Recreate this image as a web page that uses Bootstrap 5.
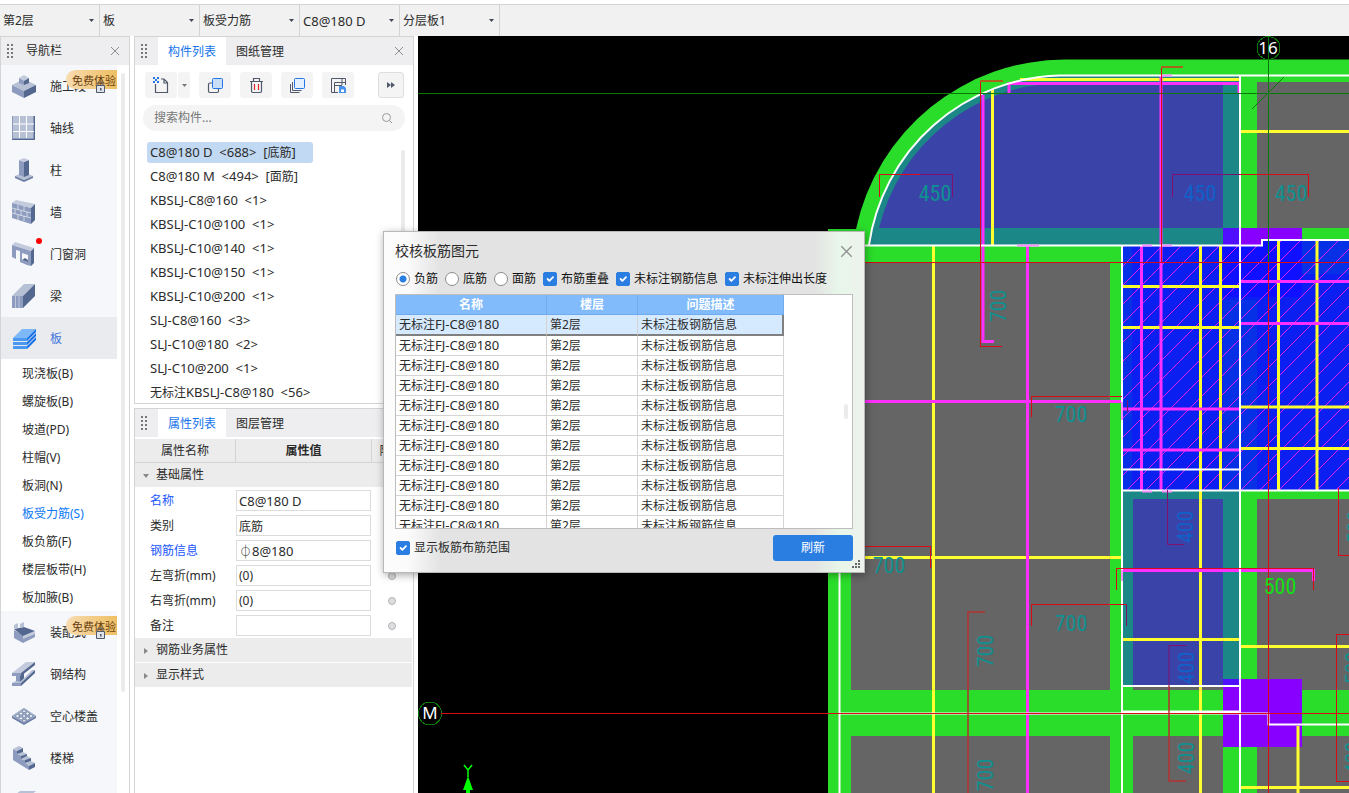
<!DOCTYPE html>
<html lang="zh-CN">
<head>
<meta charset="utf-8">
<meta name="viewport" content="width=device-width, initial-scale=1">
<title>校核板筋图元</title>
<link href="https://cdn.jsdelivr.net/npm/bootstrap@5.3.0/dist/css/bootstrap.min.css" rel="stylesheet">
<style>
  body { font: 12px/18px "Noto Sans", "Noto Sans CJK SC", sans-serif; color: #2b2b2b; background: #fff; }
  a { color: inherit; text-decoration: none; }
  button { color: inherit; }
  .latin { font-size: 13px; }
  .topbar { height: 32px; margin-top: 4px; background: #f1f1f1; border-top: 1px solid #d4d4d4; }
  .topbar select { width: 100px; height: 31px; padding: 0 0 0 3px; appearance: none; border: 0; border-right: 1px solid #d4d4d4; color: #2b2b2b;
    background: #f1f1f1 url("data:image/svg+xml,%3Csvg xmlns='http://www.w3.org/2000/svg' width='5' height='3'%3E%3Cpath d='M0 0h5L2.500 3z' fill='%23404658'/%3E%3C/svg%3E") no-repeat right 5px center; }
  .pane { border: 1px solid #d4d4d4; background: #fff; }
  .nav-pane { width: 130px; }
  .props-col { width: 280px; }
  .pane-head { height: 28px; padding: 0 9px 0 6px; background: #eeeef0; }
  .grip { width: 7px; height: 14px; background: radial-gradient(circle at 1px 1px, #777 1px, transparent 1px) 0 0 / 4px 4px; }
  .grip + .tab-btn { margin-left: 10px; }
  .nav-name { margin-left: 12px; }
  .tab-btn { height: 28px; padding: 1px 10px 0; border: 0; background: none; }
  .tab-btn.on { background: #fff; color: #1673ea; }
  .x-btn { border: 0; background: none; padding: 0; display: flex; }
  .nav-list { width: 116px; background: #f5f7fa; }
  .nav-entry { height: 42px; padding-left: 11px; gap: 14px; }
  .nav-entry > span:not(.new-dot) { padding-top: 2px; }
  .nav-entry.on { background: #eaebef; color: #3f74dd; }
  .sub-list { background: #fff; }
  .sub-list a { display: block; height: 28px; line-height: 30px; padding-left: 21px; }
  .sub-list a.on { color: #0b78f5; }
  .trial { right: 0; top: 5px; width: 51px; height: 19px; padding-left: 6px; border-radius: 10px 0 0 10px; background: linear-gradient(90deg, #f8dcb0, #eebf62); color: #6a3f10; white-space: nowrap; font-size: 11px; }
  .lock { left: 94px; top: 16px; }
  .new-dot { left: 35px; top: 5px; width: 6px; height: 6px; background: red; }
  .bar-thumb { width: 4px; border-radius: 2px; background: #ebebeb; }
  .tools { padding: 7px 9px 7px 10px; gap: 9px; }
  .tool { width: 32px; height: 26px; border: 0; border-radius: 3px; background: #f4f4f4; display: flex; align-items: center; justify-content: center; padding: 0; }
  .tool.slim { width: 12px; margin-left: 1px; }
  .tool.more { width: 26px; border: 1px solid #dedede; }
  .search-box { height: 26px; border-radius: 13px; background: #f4f4f4; margin: 0 8px; padding: 0 12px 0 11px; }
  .search-box input { border: 0; background: none; outline: 0; padding: 0; }
  .search-box input::placeholder { color: #777; }
  .list-wrap { padding: 11px 8px 0 12px; }
  .comp-list { font-size: 13px; }
  .comp-list span { font-size: 12px; }
  .comp-list a { display: block; width: 166px; height: 21px; line-height: 21px; margin-bottom: 3px; padding-left: 3px; border-radius: 3px; white-space: nowrap; }
  .comp-list a:last-child { margin-bottom: 0; }
  .comp-list a.on { background: #c1d9f2; }
  .prop-grid { width: 277px; margin-top: 2px; table-layout: fixed; border-collapse: separate; border-spacing: 0; }
  .prop-grid th { height: 24px; padding: 0; font-weight: 400; text-align: center; background: #ececec; border-right: 1px solid #d4d4d4; border-bottom: 1px solid #d4d4d4; overflow: hidden; white-space: nowrap; }
  .prop-grid td { height: 25px; padding: 0; }
  .prop-grid td:first-child { padding-left: 15px; }
  .prop-grid td.group { padding-left: 8px; background: #ececec; border-bottom: 1px solid #fff; }
  .prop-grid td.group svg { width: 6px; margin-right: 7px; }
  .prop-grid input[type=text] { display: block; width: 135px; height: 21px; border: 1px solid #dcdcdc; padding: 0 2px; outline: 0; color: #2b2b2b; }
  .blue-label { color: #1a56ff; }
  .grey-dot { display: block; width: 8px; height: 8px; margin: auto; border-radius: 50%; border: 1px solid #b0b2b6; background: #dedee0; }
  .dlg { left: 383px; top: 231px; width: 482px; min-height: 342px; border: 1px solid #b8b8b8; box-shadow: 1px 2px 8px rgba(0,0,0,.35);
    background: linear-gradient(90deg, #fdfdfd 0, #fbfbfb 24px, #e3e3e3 56px, #e3e3e3 430px, #e8f7e9 456px, #eef1ee 100%); padding: 10px 11px 11px; }
  .dlg-title { font-size: 14px; }
  .dlg input[type=radio], .dlg input[type=checkbox] { width: 14px; height: 14px; margin: 0 3px 0 0; border: 1px solid #8c8c8c; flex: none; }
  .dlg input[type=checkbox] { border-radius: 2px; }
  .dlg input[type=checkbox]:checked { background-color: #2a7de1; border-color: #2a7de1; }
  .dlg input[type=radio]:checked { background: #fff radial-gradient(circle, #2a7de1 3px, transparent 4px); }
  .opts { padding: 10px 0 6px 1px; }
  .opts label { gap: 1px; margin-right: 7px; color: #111; white-space: nowrap; }
  .dlg-foot { padding-top: 6px; }
  .dlg-foot label { gap: 1px; padding-left: 1px; }
  .grid-box { height: 235px; border: 1px solid #bdbdbd; background: #fff; overflow: hidden; }
  .issue-grid { width: 388px; table-layout: fixed; border-collapse: separate; border-spacing: 0; }
  .issue-grid th { height: 20px; padding: 0; text-align: center; color: #fff; background: #82bbfb; border-right: 1px solid #6fabee; border-bottom: 1px solid #6fabee; }
  .issue-grid td { height: 20px; padding: 0 3px; line-height: 18px; border-right: 1px solid #d4d4d4; border-bottom: 1px solid #d4d4d4; white-space: nowrap; }
  .issue-grid tr.on td { background: #d6eaff; border-bottom: 2px solid #808080; }
  .issue-grid tr.on td:last-child { border-right: 2px solid #808080; }
  .refresh { width: 80px; height: 26px; padding: 0; border: 0; border-radius: 3px; background: #2a7de1; color: #fff; }
  .cad { background: #000; }
  .cad text { font-family: "Liberation Sans Narrow", "Roboto Condensed", "DejaVu Sans Condensed", sans-serif; text-anchor: middle; }
  .cad .axis-name { font-family: "Noto Sans", sans-serif; }
</style>
</head>
<body class="vh-100 overflow-hidden d-flex flex-column">
<svg width="0" height="0" class="position-absolute" aria-hidden="true">
  <symbol id="cross" viewBox="0 0 10 10"><path d="M1 1l8 8M9 1l-8 8" fill="none" stroke="#8e8e8e"/></symbol>
  <symbol id="lockIcon" viewBox="0 0 11 12"><path d="M3 5V2.500Q3 1 5.500 1T8 2.500V5" fill="none" stroke="#5a5a5a"/><path d="M1.500 4.500h8v7h-8z" fill="#dfe3e8" stroke="#4e5a6c"/><path d="M5 7h1.500v2.500H5z" fill="#4e5a6c"/></symbol>
</svg>

<header class="topbar d-flex flex-shrink-0">
  <select aria-label="楼层"><option>第2层</option></select>
  <select aria-label="构件类别"><option>板</option></select>
  <select aria-label="构件类型"><option>板受力筋</option></select>
  <select aria-label="构件" class="latin"><option>C8@180 D</option></select>
  <select aria-label="分层"><option>分层板1</option></select>
</header>

<div class="d-flex flex-grow-1 overflow-hidden">
  <!-- 导航栏 -->
  <aside class="pane nav-pane flex-shrink-0 border-bottom-0 overflow-hidden me-1">
    <div class="pane-head d-flex align-items-center">
      <span class="grip"></span><span class="nav-name flex-grow-1">导航栏</span>
      <button class="x-btn" aria-label="关闭"><svg width="10" height="10"><use href="#cross"/></svg></button>
    </div>
    <div class="d-flex">
      <nav class="nav-list">
        <a href="#" class="nav-entry d-flex align-items-center position-relative">
          <svg width="24" height="24" viewBox="0 0 24 24"><path d="M0 11l12-6 12 6-12 6z" fill="#b7c1d6"/><path d="M0 11l12 6v7L0 18z" fill="#8d9cbe"/><path d="M24 11l-12 6v7l12-6z" fill="#54678f"/><path d="M7 4l5-3 5 3-5 3z" fill="#c3cbdc"/><path d="M7 4l5 3v4L7 9z" fill="#8d9cbe"/><path d="M17 4l-5 3v4l5-2z" fill="#54678f"/></svg>
          <span>施工段</span><span class="trial position-absolute">免费体验</span><svg class="lock position-absolute" width="11" height="12"><use href="#lockIcon"/></svg>
        </a>
        <a href="#" class="nav-entry d-flex align-items-center">
          <svg width="24" height="24" viewBox="0 0 24 24"><path d="M0 0h23v24H0z" fill="#54678f"/><path d="M0 0h21.500v22.500H0z" fill="#b7c1d6"/><path d="M7.500 0v22M14.500 0v22M0 8h22M0 15.500h22" stroke="#fff"/><path d="M.5 0v22.500h21" fill="none" stroke="#8d9cbe"/></svg><span>轴线</span></a>
        <a href="#" class="nav-entry d-flex align-items-center">
          <svg width="24" height="24" viewBox="0 0 24 24"><path d="M3 18l9-4 9 4-9 4z" fill="#b7c1d6"/><path d="M3 18l9 4v2l-9-4zM21 18l-9 4v2l9-4z" fill="#6c7da5"/><path d="M7 2l5 2v15l-5-2z" fill="#8d9cbe"/><path d="M17 2l-5 2v15l5-2z" fill="#54678f"/><path d="M7 2l5-2 5 2-5 2z" fill="#c3cbdc"/></svg><span>柱</span></a>
        <a href="#" class="nav-entry d-flex align-items-center">
          <svg width="24" height="24" viewBox="0 0 24 24"><path d="M0 3l4-3 19 4-4 4z" fill="#c3cbdc"/><path d="M0 3l19 5v16L0 18z" fill="#8d9cbe"/><path d="M19 8l4-4v16l-4 4z" fill="#54678f"/><path d="M0 8l19 5M0 13l19 5M6 5v5M12 6v5M3 9v5M9 11v5M15 12v5M6 15v5M12 16v5" stroke="#dfe4ee" stroke-width=".8"/></svg><span>墙</span></a>
        <a href="#" class="nav-entry d-flex align-items-center position-relative">
          <svg width="24" height="24" viewBox="0 0 24 24"><path d="M0 3l3-3 19 6-3 3z" fill="#c3cbdc"/><path d="M0 3l19 6v15l-4-1-7-3V9L4 8v9l-4-2zM10 11v7l6 2v-7z" fill="#8d9cbe" fill-rule="evenodd"/><path d="M19 9l3-3v15l-3 3zM10 18l3-2 3 2v2z" fill="#54678f"/></svg><span>门窗洞</span><span class="new-dot position-absolute rounded-circle"></span></a>
        <a href="#" class="nav-entry d-flex align-items-center">
          <svg width="24" height="24" viewBox="0 0 24 24"><path d="M0 12L12 0h11L11 12z" fill="#b7c1d6"/><path d="M11 12L23 0v12L11 24z" fill="#54678f"/><path d="M0 12h11v12H0z" fill="#8d9cbe"/><path d="M3.500 12v12M7 12v12" stroke="#c9d1e2" stroke-width=".8"/></svg><span>梁</span></a>
        <a href="#" class="nav-entry on d-flex align-items-center">
          <svg width="24" height="24" viewBox="0 0 24 24"><path d="M1 12l9-9h14l-9 9z" fill="#7db8f8"/><path d="M1 12h14v3H1zM1 16h14v3H1zM1 20h14v3H1z" fill="#4a98f0"/><path d="M15 12l9-9v3l-9 9zM15 16l9-9v3l-9 9zM15 20l9-9v3l-9 9z" fill="#1a72e8"/></svg><span>板</span></a>
        <div class="sub-list">
          <a href="#">现浇板(B)</a><a href="#">螺旋板(B)</a><a href="#">坡道(PD)</a><a href="#">柱帽(V)</a><a href="#">板洞(N)</a><a href="#" class="on">板受力筋(S)</a><a href="#">板负筋(F)</a><a href="#">楼层板带(H)</a><a href="#">板加腋(B)</a>
        </div>
        <a href="#" class="nav-entry d-flex align-items-center position-relative">
          <svg width="24" height="24" viewBox="0 0 24 24"><path d="M2 10l9 5 12-4v6l-12 6-9-5z" fill="#8d9cbe"/><path d="M2 9l10-2 11 4-12 5z" fill="#54678f"/><path d="M11 16l12-5v3l-12 5z" fill="#c3cbdc"/><path d="M2 5l4-2v5L2 9zM8 4l4-2v5L8 8z" fill="#b7c1d6"/></svg>
          <span>装配式</span><span class="trial position-absolute">免费体验</span><svg class="lock position-absolute" width="11" height="12"><use href="#lockIcon"/></svg></a>
        <a href="#" class="nav-entry d-flex align-items-center">
          <svg width="24" height="24" viewBox="0 0 24 24"><path d="M0 11L14 0h9L9 11z" fill="#c3cbdc"/><path d="M9 11L23 0v3L9 14z" fill="#54678f"/><path d="M0 11h9v3H0z" fill="#8d9cbe"/><path d="M4 14h4v6H4z" fill="#8d9cbe"/><path d="M8 14l4-3v6l-4 3z" fill="#54678f"/><path d="M8 20l12-12h3L9 21H0l4-2z" fill="#b7c1d6"/><path d="M0 21h9v3H0z" fill="#8d9cbe"/><path d="M9 21L23 8v3L9 24z" fill="#54678f"/></svg><span>钢结构</span></a>
        <a href="#" class="nav-entry d-flex align-items-center">
          <svg width="24" height="24" viewBox="0 0 24 24"><path d="M0 12l12-8 12 8v2l-12 7-12-7z" fill="#6c7da5"/><path d="M0 12l12-8 12 8-12 7z" fill="#aab6ce"/><path d="M3 12l2.500-1.600L8 12l-2.500 1.600zM6.500 9.600L9 8l2.500 1.600L9 11.200zM10 7.200l2-1.400 2.500 1.400L12 8.800zM6.500 14.400L9 12.800l2.500 1.600L9 16zM10 12l2-1.400 2.500 1.400L12 13.600zM13 9.600L15.500 8 18 9.600l-2.500 1.600zM10 16.800l2-1.400 2.500 1.400L12 18zM13 14.400l2.500-1.600 2.500 1.600-2.500 1.600zM16.500 12l2.500-1.600 2.500 1.600-2.500 1.600z" fill="#f5f7fa" stroke="#54678f" stroke-width=".6"/></svg><span>空心楼盖</span></a>
        <a href="#" class="nav-entry d-flex align-items-center">
          <svg width="24" height="24" viewBox="0 0 24 24"><path d="M1 3l4 2v3l4 1v4l4 1v3l4 1v6L1 14z" fill="#8d9cbe"/><path d="M1 3l6-3 4 2-6 3zM5 8l6-2 4 2-6 2zM9 13l6-3 4 2-6 2zM13 17l6-2 4 2-6 3z" fill="#b7c1d6"/><path d="M5 5l6-3v4L5 8zM9 10l6-2v2l-6 3zM13 14l6-2v3l-6 2zM17 20l6-3v4l-6 3z" fill="#54678f"/></svg><span>楼梯</span></a>
        <a href="#" class="nav-entry d-flex align-items-center" aria-label="其他">
          <svg width="24" height="24" viewBox="0 0 24 24"><path d="M4 6l4-3h16l-5 4v14H4z" fill="#b7c1d6"/></svg></a>
      </nav>
      <div class="bar-thumb ms-1 mt-2" style="height:78vh"></div>
    </div>
  </aside>

  <!-- 构件列表与属性列表 -->
  <section class="props-col flex-shrink-0 d-flex flex-column me-1">
    <div class="pane">
      <div class="pane-head d-flex align-items-center">
        <span class="grip"></span>
        <button class="tab-btn on">构件列表</button><button class="tab-btn">图纸管理</button>
        <button class="x-btn ms-auto" aria-label="关闭"><svg width="10" height="10"><use href="#cross"/></svg></button>
      </div>
      <div class="tools d-flex align-items-center">
        <div class="d-flex">
          <button class="tool" aria-label="新建"><svg width="17" height="17" viewBox="0 0 17 17"><path d="M2.500 7v8.500h12V5.500L11 2H8M11 2v4h3.500" fill="none" stroke="#50586a" stroke-width="1.200"/><path d="M0 0h2v2H0zM4 0h2v2H4zM2 2h2v2H2zM0 4h2v2H0zM4 4h2v2H4z" fill="#2277e5"/></svg></button>
          <button class="tool slim" aria-label="新建选项"><svg width="5" height="3"><path d="M0 0h5L2.500 3z" fill="#777"/></svg></button>
        </div>
        <button class="tool" aria-label="复制"><svg width="17" height="17" viewBox="0 0 17 17"><path d="M5 6H3Q1.500 6 1.500 7.500V14Q1.500 15.500 3 15.500h7Q11.500 15.500 11.500 14v-2" fill="none" stroke="#50586a" stroke-width="1.200"/><rect x="5.500" y="1.500" width="10" height="10" rx="1" fill="#c9def7" stroke="#2277e5"/></svg></button>
        <button class="tool" aria-label="删除"><svg width="17" height="17" viewBox="0 0 17 17"><path d="M2 4.500h13M5.500 4V1.500h6V4M3.500 5v9Q3.500 15.500 5 15.500h7Q13.500 15.500 13.500 14V5" fill="none" stroke="#50586a" stroke-width="1.200"/><path d="M6.500 7v6M10.500 7v6" stroke="#e5222e" stroke-width="1.200"/></svg></button>
        <button class="tool" aria-label="层间复制"><svg width="17" height="17" viewBox="0 0 17 17"><path d="M1.500 7v8.500h9M3.500 5v8.500h9" fill="none" stroke="#50586a"/><rect x="5.500" y="1.500" width="10" height="10" rx="1" fill="#e4f0fd" stroke="#2277e5"/></svg></button>
        <button class="tool" aria-label="存档"><svg width="17" height="17" viewBox="0 0 17 17"><path d="M8 15.500H1.500v-14h14V8M4.500 15V5.500H15M4.500 8.500H12M12 2v6" fill="none" stroke="#50586a"/><path d="M9 9h5l2 2v5H9z" fill="#4a93ec"/><path d="M11 12.500h3V15h-3z" fill="#fff"/></svg></button>
        <button class="tool more ms-auto" aria-label="更多"><svg width="8" height="6"><path d="M0 0l4 3-4 3zM4 0l4 3-4 3z" fill="#50586a"/></svg></button>
      </div>
      <div class="search-box d-flex align-items-center">
        <input type="text" class="flex-grow-1" placeholder="搜索构件..." aria-label="搜索构件">
        <svg width="12" height="12" viewBox="0 0 12 12"><circle cx="5.500" cy="5.500" r="4" fill="none" stroke="#999"/><path d="M8.500 8.500l2.500 2.500" stroke="#999"/></svg>
      </div>
      <div class="list-wrap d-flex justify-content-between">
        <div class="comp-list">
          <a href="#" class="on">C8@180 D &nbsp;&lt;688&gt; &nbsp;[<span>底筋</span>]</a><a href="#">C8@180 M &nbsp;&lt;494&gt; &nbsp;[<span>面筋</span>]</a><a href="#">KBSLJ-C8@160 &nbsp;&lt;1&gt;</a><a href="#">KBSLJ-C10@100 &nbsp;&lt;1&gt;</a><a href="#">KBSLJ-C10@140 &nbsp;&lt;1&gt;</a><a href="#">KBSLJ-C10@150 &nbsp;&lt;1&gt;</a><a href="#">KBSLJ-C10@200 &nbsp;&lt;1&gt;</a><a href="#">SLJ-C8@160 &nbsp;&lt;3&gt;</a><a href="#">SLJ-C10@180 &nbsp;&lt;2&gt;</a><a href="#">SLJ-C10@200 &nbsp;&lt;1&gt;</a><a href="#"><span>无标注</span>KBSLJ-C8@180 &nbsp;&lt;56&gt;</a>
        </div>
        <div class="bar-thumb mt-2" style="height:160px"></div>
      </div>
    </div>
    <div class="pane flex-grow-1 mt-1 border-bottom-0">
      <div class="pane-head d-flex align-items-center">
        <span class="grip"></span>
        <button class="tab-btn on">属性列表</button><button class="tab-btn">图层管理</button>
      </div>
      <table class="prop-grid">
        <colgroup><col style="width:101px"><col style="width:136px"><col></colgroup>
        <thead><tr><th>属性名称</th><th class="fw-bold">属性值</th><th>附加</th></tr></thead>
        <tbody>
          <tr><td class="group" colspan="3"><svg height="4" class="align-middle"><path d="M0 0h6L3 4z" fill="#888"/></svg>基础属性</td></tr>
          <tr><td><label class="blue-label" for="p1">名称</label></td><td><input type="text" class="latin" id="p1" value="C8@180 D"></td><td></td></tr>
          <tr><td><label for="p2">类别</label></td><td><input type="text" id="p2" value="底筋"></td><td><span class="grey-dot"></span></td></tr>
          <tr><td><label class="blue-label" for="p3">钢筋信息</label></td><td><input type="text" class="latin" id="p3" value="⏀8@180"></td><td><span class="grey-dot"></span></td></tr>
          <tr><td><label for="p4">左弯折(mm)</label></td><td><input type="text" id="p4" value="(0)"></td><td><span class="grey-dot"></span></td></tr>
          <tr><td><label for="p5">右弯折(mm)</label></td><td><input type="text" id="p5" value="(0)"></td><td><span class="grey-dot"></span></td></tr>
          <tr><td><label for="p6">备注</label></td><td><input type="text" id="p6" value=""></td><td><span class="grey-dot"></span></td></tr>
          <tr><td class="group" colspan="3"><svg height="6" class="align-middle"><path d="M1 0l4 3-4 3z" fill="#888"/></svg>钢筋业务属性</td></tr>
          <tr><td class="group" colspan="3"><svg height="6" class="align-middle"><path d="M1 0l4 3-4 3z" fill="#888"/></svg>显示样式</td></tr>
        </tbody>
      </table>
    </div>
  </section>

  <!-- 绘图区 -->
  <main class="cad flex-grow-1 overflow-hidden">
    <svg class="d-block w-100 h-100" viewBox="418 36 931 757" preserveAspectRatio="xMinYMin slice">
      <defs>
        <pattern id="hatch" width="19" height="19" patternUnits="userSpaceOnUse" patternTransform="translate(1122 286)"><path d="M-1 20L20-1" stroke="#e01ff0" shape-rendering="crispEdges"/></pattern>
      </defs>
      <!-- 梁与墙 -->
      <path d="M828 793V229h28A214 214 0 0 1 1065 59.500H1349V793z" fill="#2bdd2b"/>
      <path d="M869 245A198 198 0 0 1 1060 75.500H1240V245z" fill="#1b8787"/>
      <path d="M879 228A190 190 0 0 1 1060 83H1223V228z" fill="#3a44a8"/>
      <g fill="#656565">
        <path d="M851 262h259v428H851zM851 736h259v57H851zM1133 736h90v57h-90zM1257 82h92v146h-92zM1257 499h92v191h-92zM1257 736h92v57h-92zM1133 685h90v5h-90z"/>
      </g>
      <path d="M1122 491h118v194h-118z" fill="#1b8787"/><path d="M1133 499h90v186h-90z" fill="#3a44a8"/>
      <path d="M1223 228h79v20h-79zM1223 679h79v68h-79z" fill="#8800ff"/><path d="M1223 228h17v20h-17zM1223 679h17v6h-17z" fill="#5010ff"/>
      <path d="M1122 245h118v245h-118zM1240 245h22v-5h87v250h-109z" fill="#0a1ff0"/>
      <path d="M1122 245h10v245h-10zM1223 300h34v190h-34zM1302 240h47v34h-47z" fill="#0630e6"/>
      <path d="M1223 245h17v52h-17zM1240 245h22v-5h40v57h-62z" fill="#0f10ff"/>
      <path d="M1122 245h118v245h-118zM1240 245h22v-5h87v250h-109z" fill="url(#hatch)"/>
      <!-- 钢筋线 -->
      <g fill="none" stroke="#ffff30" stroke-width="3">
        <path d="M933.500 246V793M992.500 90V245M1020 79.500H1239M1200.500 246V793M1220.500 246V490M1122 286.500H1239M1122 327.500H1239M1278.500 240V490M1317 240V490M1241 131.500H1349M1241 407H1349M1241 448.500H1349M865 557.500H1121M1122 639.500H1239M1241 646.500H1349M1241 787.500H1349M1298 726V793"/>
      </g>
      <g fill="none" stroke="#ff30ff" stroke-width="3">
        <path d="M983 95V341.500H994M1027.500 246V793M1009 94V83.500H1239V94M1141.500 246V490M1161 76V490M865 401.500H1121M1122 409H1239M1122 450H1239M1240 281.500H1349M1240 323.500H1349M1122 570.500H1313.500V581"/>
      </g>
      <g fill="none" stroke="#fff" stroke-width="2">
        <path d="M869 245A198 198 0 0 1 1060 75.500H1349M865 245.500H1262V240H1349M1240 76V793M1122 245V793M839.500 573V793M1122 469.500H1240M1122 490.500H1349M1122 686H1240M1122 711.500H1240M840 713.500H1268.500V724.500H1349"/>
      </g>
      <path d="M1017 245.500h22M1028 713.500h12M1142 245.500h10M1162 245.500h10M1142 491.500h10M1162 491.500h10M1161 75.500h11M1122 570v11M1122 402v18" stroke="#ff90ff" stroke-width="2"/>
      <!-- 轴网 -->
      <g fill="none" stroke="#087a08" shape-rendering="crispEdges">
        <path d="M418 93.500H1349M1268.500 36V262"/><circle cx="1268.500" cy="48" r="11.500"/><circle cx="430" cy="713.500" r="11.500"/>
      </g>
      <path d="M1252 109l32-32" stroke="#087a08"/>
      <!-- 标注线 -->
      <g fill="none" stroke="#dc0a14" shape-rendering="crispEdges">
        <path d="M441 713.500H1349M865 262.500H1349M1268.500 262V793M980.500 81V346.500H1002M1161 67V262M879.500 197V174.500H920M1240 174.500H1308V197M865 546.500H930V568M1031 417V396.500H1122M1031 626V604.500H1126M1116.500 590V568.500H1313.500V590M1349 555.500H1338.500V488M1349 634.500H1336.500V781H1349"/>
      </g>
      <path d="M980 81h23M1161 67h22" stroke="#a8641c" stroke-width="2"/>
      <path d="M985 612H968V793M1169 686V781H1186" fill="none" stroke="#b53030" stroke-width="1.500"/>
      <path d="M920 174.500H952.500V197M1172.500 197V174.500H1240M1167.500 490V544.500H1184M1186 645.500H1169V686M1126.500 604V626M1127.500 400V412" fill="none" stroke="#801070"/>
      <g font-size="22" fill="#0f9090">
        <text x="935" y="201">450</text><text x="1200" y="201" fill="#1060c8">450</text><text x="1291" y="201">450</text>
        <text x="889" y="573">700</text><text x="1071" y="422">700</text><text x="1071" y="631">700</text><text x="1280" y="594" fill="#10e010">500</text>
        <text transform="translate(1006 306) rotate(-90)">700</text><text transform="translate(993 651) rotate(-90)">700</text><text transform="translate(993 775) rotate(-90)">700</text>
        <text transform="translate(1193 527) rotate(-90)" fill="#1060c8">400</text><text transform="translate(1194 668) rotate(-90)" fill="#1060c8">400</text><text transform="translate(1194 758) rotate(-90)">400</text>
        <text transform="translate(1363 527) rotate(-90)">500</text><text transform="translate(1361 668) rotate(-90)">500</text><text transform="translate(1361 758) rotate(-90)">400</text>
      </g>
      <g fill="#fff" font-size="17"><text class="axis-name" x="1268" y="54">16</text><text class="axis-name" x="430" y="719">M</text></g>
      <path d="M464 765l4 5 4-5M468 770v7" fill="none" stroke="#0f0" stroke-width="1.500"/><path d="M468 776l-5 14h3v3h4v-3h3z" fill="#0f0"/>
    </svg>
  </main>
</div>

<!-- 浮动窗口 -->
<div class="dlg position-absolute d-flex flex-column" role="dialog" aria-labelledby="dlgTitle">
  <div class="d-flex align-items-center justify-content-between">
    <span id="dlgTitle" class="dlg-title">校核板筋图元</span>
    <button class="x-btn" aria-label="关闭"><svg width="13" height="13"><use href="#cross"/></svg></button>
  </div>
  <div class="opts d-flex align-items-center">
    <label class="d-flex align-items-center"><input class="form-check-input" type="radio" name="kind" checked>负筋</label>
    <label class="d-flex align-items-center"><input class="form-check-input" type="radio" name="kind">底筋</label>
    <label class="d-flex align-items-center"><input class="form-check-input" type="radio" name="kind">面筋</label>
    <label class="d-flex align-items-center"><input class="form-check-input" type="checkbox" checked>布筋重叠</label>
    <label class="d-flex align-items-center"><input class="form-check-input" type="checkbox" checked>未标注钢筋信息</label>
    <label class="d-flex align-items-center me-0"><input class="form-check-input" type="checkbox" checked>未标注伸出长度</label>
  </div>
  <div class="grid-box flex-shrink-0 d-flex justify-content-between">
    <table class="issue-grid align-self-start">
      <colgroup><col style="width:151px"><col style="width:91px"><col></colgroup>
      <thead><tr><th>名称</th><th>楼层</th><th>问题描述</th></tr></thead>
      <tbody>
        <tr class="on"><td>无标注<span class="latin">FJ-C8@180</span></td><td>第2层</td><td>未标注板钢筋信息</td></tr>
        <tr><td>无标注<span class="latin">FJ-C8@180</span></td><td>第2层</td><td>未标注板钢筋信息</td></tr>
        <tr><td>无标注<span class="latin">FJ-C8@180</span></td><td>第2层</td><td>未标注板钢筋信息</td></tr>
        <tr><td>无标注<span class="latin">FJ-C8@180</span></td><td>第2层</td><td>未标注板钢筋信息</td></tr>
        <tr><td>无标注<span class="latin">FJ-C8@180</span></td><td>第2层</td><td>未标注板钢筋信息</td></tr>
        <tr><td>无标注<span class="latin">FJ-C8@180</span></td><td>第2层</td><td>未标注板钢筋信息</td></tr>
        <tr><td>无标注<span class="latin">FJ-C8@180</span></td><td>第2层</td><td>未标注板钢筋信息</td></tr>
        <tr><td>无标注<span class="latin">FJ-C8@180</span></td><td>第2层</td><td>未标注板钢筋信息</td></tr>
        <tr><td>无标注<span class="latin">FJ-C8@180</span></td><td>第2层</td><td>未标注板钢筋信息</td></tr>
        <tr><td>无标注<span class="latin">FJ-C8@180</span></td><td>第2层</td><td>未标注板钢筋信息</td></tr>
        <tr><td>无标注<span class="latin">FJ-C8@180</span></td><td>第2层</td><td>未标注板钢筋信息</td></tr>
      </tbody>
    </table>
    <div class="bar-thumb align-self-center me-1" style="height:15px"></div>
  </div>
  <div class="dlg-foot d-flex justify-content-between align-items-center">
    <label class="d-flex align-items-center"><input class="form-check-input" type="checkbox" checked>显示板筋布筋范围</label>
    <button class="refresh">刷新</button>
  </div>
  <svg class="position-absolute bottom-0 end-0 me-1 mb-1" width="8" height="8"><path d="M6 0h2v2H6zM3 3h2v2H3zM6 3h2v2H6zM0 6h2v2H0zM3 6h2v2H3zM6 6h2v2H6z" fill="#666"/></svg>
</div>
<script src="https://cdn.jsdelivr.net/npm/bootstrap@5.3.0/dist/js/bootstrap.bundle.min.js"></script>
</body>
</html>
